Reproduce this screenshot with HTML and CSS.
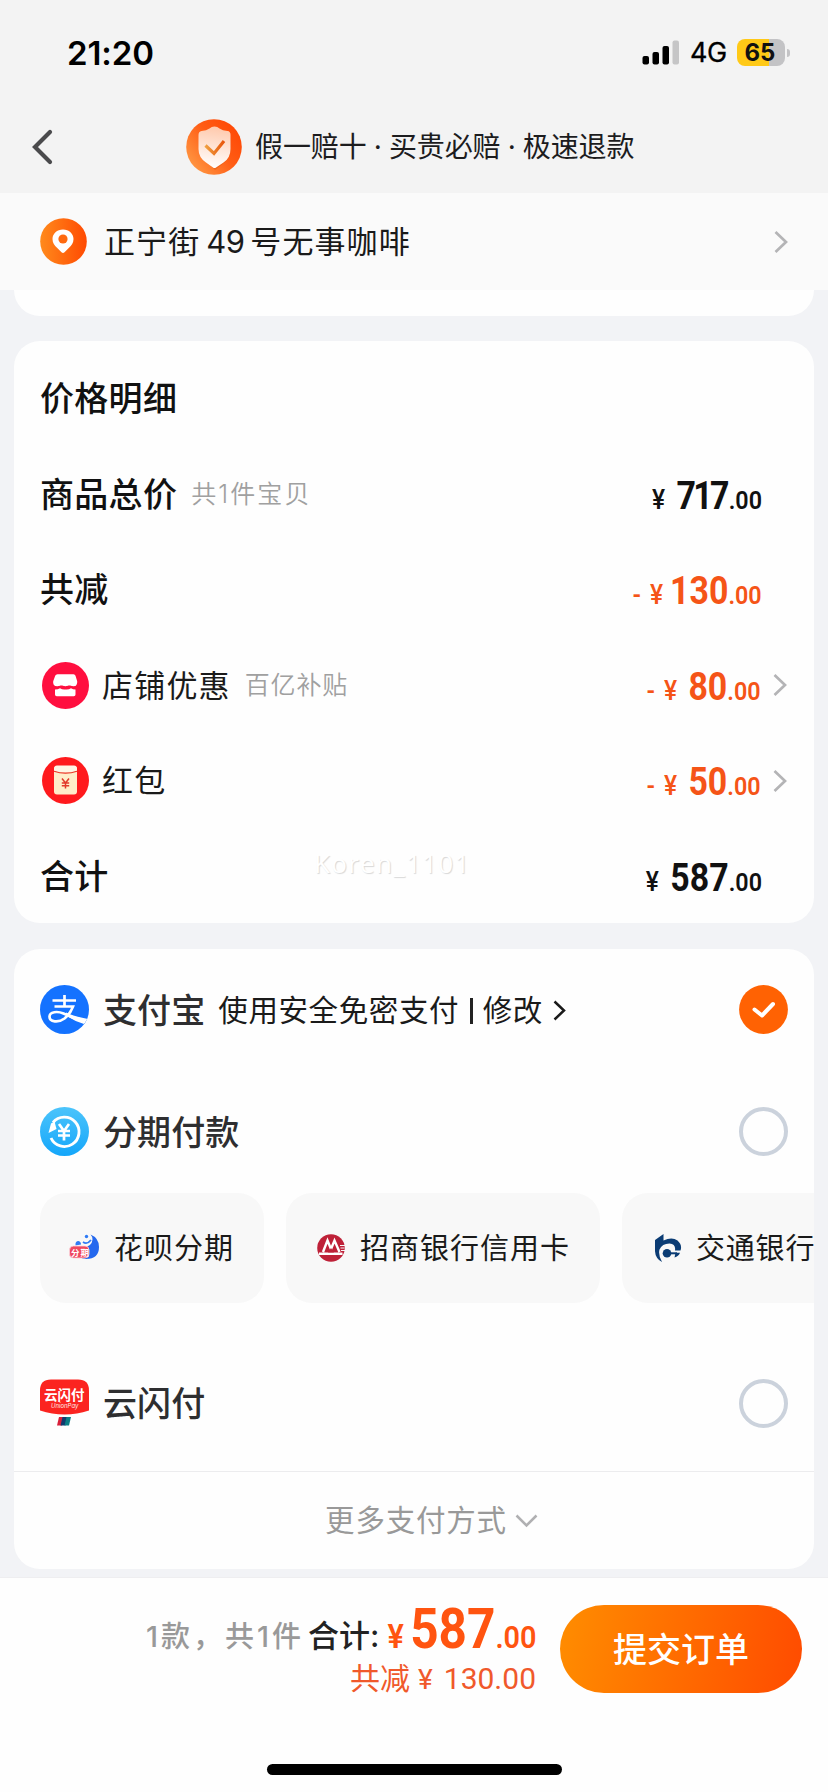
FILE: index.html
```html
<!DOCTYPE html>
<html lang="zh-CN">
<head>
<meta charset="utf-8">
<title>确认订单</title>
<link rel="stylesheet" href="styles.css">
</head>
<body>
<div class="page">
  <div class="status">
    <span class="time">21:20</span>
    <svg class="signal" width="38" height="26" viewBox="0 0 38 26"><rect x="0.5" y="16" width="6.5" height="8.5" rx="2"/><rect x="10.5" y="12" width="6.5" height="12.500" rx="2"/><rect x="20.500" y="6" width="6.500" height="18.500" rx="2"/><rect x="30.500" y="0.500" width="6.500" height="24" rx="2" fill="#c5c5c6"/></svg>
    <span class="net">4G</span>
    <span class="battery">65</span><span class="nub"></span>
  </div>
  <div class="nav">
    <svg class="back" width="22" height="36" viewBox="0 0 22 36"><path d="M19 3 4 18l15 15" fill="none" stroke="#4a4a4c" stroke-width="4.200" stroke-linecap="round"/></svg>
    <svg class="shield" width="56" height="56" viewBox="0 0 56 56">
      <defs>
        <linearGradient id="sg" x1="1" y1="0" x2="0" y2=".8"><stop offset="0" stop-color="#ff4200"/><stop offset=".5" stop-color="#ff5c14"/><stop offset="1" stop-color="#ff9a45"/></linearGradient>
        <linearGradient id="sw" x1=".5" y1="0" x2=".4" y2="1"><stop offset="0" stop-color="#ffc9ac"/><stop offset="1" stop-color="#fff"/></linearGradient>
        <linearGradient id="ck" x1="0" y1="0" x2="1" y2="0"><stop offset="0" stop-color="#f0a040"/><stop offset="1" stop-color="#e8560c"/></linearGradient>
      </defs>
      <circle cx="28" cy="28" r="27.800" fill="url(#sg)"/>
      <path d="M44 17q3 20-5 26l-10 8-4-4z" fill="#d9540e" opacity=".45"/>
      <path d="M28.500 7.500q3 0 5 2 3 2 8 2.500 3 .3 3 4v14q0 9-7 13.500l-7.500 5q-1.500 1-3 0l-7-5q-7.500-5-7.500-13.500V16q0-3.500 3-4 5-.5 8-2.500 2-2 5-2z" fill="url(#sw)"/>
      <path d="m19.500 26.500 8.500 8 10-12.500" fill="none" stroke="url(#ck)" stroke-width="3.200"/>
    </svg>
    <div class="promise"><span>假一赔十</span><i>·</i><span>买贵必赔</span><i>·</i><span>极速退款</span></div>
  </div>
  <div class="address">
    <svg width="47" height="47" viewBox="0 0 47 47">
      <defs><linearGradient id="pg" x1="0" y1="0" x2="1" y2="0"><stop offset="0" stop-color="#ff8a1c"/><stop offset="1" stop-color="#ff4a02"/></linearGradient></defs>
      <circle cx="23.500" cy="23.500" r="23.300" fill="url(#pg)"/>
      <path d="M23 11.500c6 0 10.500 4.200 10.500 9.500 0 4-2 6.500-4.500 8.800l-4.500 4.500q-1.500 1.400-3 0L17 29.800c-2.500-2.300-4.500-4.800-4.500-8.800 0-5.300 4.500-9.500 10.500-9.500z" fill="#fff"/><circle cx="23" cy="21" r="4.600" fill="#ff6a10"/>
    </svg>
    <div class="addr-text"><span>正宁街</span><b>49</b><span>号无事咖啡</span></div>
    <svg class="chev" width="14" height="24" viewBox="0 0 14 24"><path d="m1.500 2 10.500 10-10.500 10" fill="none" stroke="#b4b4b6" stroke-width="2.700"/></svg>
  </div>

  <div class="prev-card"></div>

  <div class="card prices">
    <div class="row"><span class="strong">价格明细</span></div>
    <div class="row"><span class="strong">商品总价</span><span class="hint wide">共<em>1</em>件宝贝</span><span class="price n717"><s>¥</s><b>717</b>.00</span></div>
    <div class="row"><span class="strong">共减</span><span class="price off n130"><u>-</u><s>¥</s><b>130</b>.00</span></div>
    <div class="row">
      <svg class="dot" width="47" height="47" viewBox="0 0 47 47"><circle cx="23.500" cy="23.500" r="23.500" fill="#ff0f3f"/><path d="M15.500 12.300h16q1.500 0 2 1.500l1.700 5.500q.5 5-4 5-2.300 0-3.800-2-1.600 2-4 2t-4-2q-1.600 2-4 2-5 0-4.200-5l2-5.500q.5-1.500 2.300-1.500z" fill="#fff"/><path d="M13 18h21v5.500H13z" fill="#fff"/><path d="M13 27.500q3 0 5-1.300 2.500 1.800 5.500 1.300 3 .5 5.500-1.300 2 1.300 4.500 1.300v5q0 1.700-1.700 1.700H14.700q-1.700 0-1.700-1.700z" fill="#fff"/></svg>
      <span class="item">店铺优惠</span><span class="hint">百亿补贴</span><span class="price off"><u>-</u><s>¥</s><b>80</b>.00</span>
      <svg class="chev" width="14" height="24" viewBox="0 0 14 24"><path d="m1.500 2 10.500 10-10.500 10" fill="none" stroke="#b4b4b6" stroke-width="2.700"/></svg>
    </div>
    <div class="row">
      <svg class="dot" width="47" height="47" viewBox="0 0 47 47"><circle cx="23.500" cy="23.500" r="23.500" fill="#ff1a1d"/><rect x="12" y="9" width="23" height="28.500" rx="3" fill="#ffedc9"/><path d="M12 14V12q0-3.500 3-3.500h17q3 0 3 3.500v2q-11.500 4-23 0z" fill="#fff6e6"/><path d="M12 14.200q11.500 4 23 0" fill="none" stroke="#ea3425" stroke-width="1.200"/><path d="m20 21.500 3.500 4.500 3.500-4.500M23.500 26v5.500M19.800 26h7.400M19.800 28.800h7.400" fill="none" stroke="#e23a2c" stroke-width="1.500"/></svg>
      <span class="item">红包</span><span class="price off"><u>-</u><s>¥</s><b>50</b>.00</span>
      <svg class="chev" width="14" height="24" viewBox="0 0 14 24"><path d="m1.500 2 10.500 10-10.500 10" fill="none" stroke="#b4b4b6" stroke-width="2.700"/></svg>
    </div>
    <div class="row"><span class="strong">合计</span><span class="price"><s>¥</s><b>587</b>.00</span></div>
    <span class="watermark">Koren_1101</span>
  </div>

  <div class="card pay">
    <div class="method m1">
      <svg width="49" height="49" viewBox="0 0 49 49"><defs><clipPath id="ac"><circle cx="24.500" cy="24.500" r="24.500"/></clipPath></defs><g clip-path="url(#ac)"><rect width="49" height="49" fill="#1472ff"/><path d="M12.500 15.500h23.500M24.500 10v11M14.500 21.500H33q-2.500 7-8.500 12c-6 4.500-15 3.500-15-1.700 0-5.300 8-5.800 14-3.300L34 33" fill="none" stroke="#fff" stroke-width="2.700"/><path d="M26 27.500q8 4 22 6.500l-4 5q-10-3-18-8.500z" fill="#fff"/></g></svg>
      <span class="name">支付宝</span>
      <span class="desc">使用安全免密支付</span><span class="bar"></span><span class="desc">修改</span>
      <svg class="go" width="14" height="22" viewBox="0 0 14 22"><path d="m1.500 1.500 9.500 9-9.500 9" fill="none" stroke="#1a1a1a" stroke-width="2.500"/></svg>
      <svg class="radio" width="49" height="49" viewBox="0 0 49 49"><circle cx="24.500" cy="24.500" r="24.400" fill="#ff6203"/><path d="m15.500 24.500 7.500 6L34 19" fill="none" stroke="#fff" stroke-width="4" stroke-linecap="round" stroke-linejoin="round"/></svg>
    </div>
    <div class="method m2">
      <svg width="49" height="49" viewBox="0 0 49 49"><defs><linearGradient id="bg" x1="0" y1="0" x2="0" y2="1"><stop offset="0" stop-color="#4cc4fb"/><stop offset="1" stop-color="#14a6fa"/></linearGradient></defs><circle cx="24.500" cy="24.500" r="24.500" fill="url(#bg)"/><path d="M13 15.500A14.700 14.700 0 1 1 11 31" fill="none" stroke="#fff" stroke-width="2.900"/><path d="M8.500 26 11 16.500l3.500-2 2 7.500z" fill="#fff"/><path d="m19 17 5 7 5-7M24 24v9.500M18 24h12M18 28.500h12" fill="none" stroke="#fff" stroke-width="2.700"/></svg>
      <span class="name">分期付款</span><span class="radio ring"></span>
    </div>
    <div class="chips">
      <div class="chip">
        <svg width="32" height="30" viewBox="0 0 32 30"><path d="M21.500 1.500q8.500 3.500 8.500 12.500 0 12-13 12-4 0-6-2l2-9q10-1 10.500-8.500 0-3-2-5z" fill="#2468ee"/><path d="M6.500 12.500q-.5-4.500 3-4.500 2.500.5 2.500 3.500z" fill="#2f7bf5"/><path d="M14 9q4 3 8-2" fill="none" stroke="#2f7bf5" stroke-width="1.800"/><circle cx="17.500" cy="3.500" r="1.700" fill="#2f7bf5"/><rect x=".5" y="13" width="19.500" height="12" rx="4" fill="#ef4961" stroke="#fbd3da" stroke-width=".8"/><text x="2" y="22.500" class="tag">分期</text></svg>
        <span>花呗分期</span>
      </div>
      <div class="chip c2">
        <svg width="28" height="28" viewBox="0 0 28 28"><circle cx="14" cy="14" r="13.800" fill="#be2138"/><path d="M6 18 10.500 6.500 14 15l3.500-8.500 5 11.500M2 19.800h23.500" fill="none" stroke="#fff" stroke-width="2.400"/><path d="M11 18.500h6l-3-4.500z" fill="#be2138"/><path d="M23 11.500h5M23.500 14h4M24 16.500h4" stroke="#f7f7f7" stroke-width="1"/></svg>
        <span>招商银行信用卡</span>
      </div>
      <div class="chip c3">
        <svg width="27" height="28" viewBox="0 0 27 28"><path d="M0 6 8.500 0v6.500Q17 2.500 22.500 6.500 27.500 11 25.500 16.500H20Q21 10 14.500 9.500 7 9.500 4.500 15.500 3 21 7 28-.5 24 0 15z" fill="#0b3c74"/><path d="M25 18.800q-1.500 3.700-5.500 4.700l1-4.700z" fill="#0b3c74"/><circle cx="12" cy="19.300" r="4.300" fill="#0b3c74"/><path d="M12 18.300h10v2H12z" fill="#0b3c74"/></svg>
        <span>交通银行</span>
      </div>
    </div>
    <div class="method m3">
      <svg width="49" height="49" viewBox="0 0 49 49"><path d="M11 .5h27q11 0 11 11v20Q37 35.500 24.500 35.500T0 31.500v-20Q0 .5 11 .5z" fill="#fb2420"/><text x="4" y="20.500" class="up-cn">云闪付</text><text x="11" y="29" class="up-en">UnionPay</text><path d="M19 38h5l-2 8.500h-5z" fill="#d8203a"/><path d="M22.500 38h5l-2 8.500h-5z" fill="#123a6e"/><path d="M26.500 38h4.500l-2 8.500h-4.500z" fill="#0b7d85"/></svg>
      <span class="name">云闪付</span><span class="radio ring"></span>
    </div>
    <div class="more"><span>更多支付方式</span><svg width="23" height="14" viewBox="0 0 23 14"><path d="m1.500 1.500 10 10 10-10" fill="none" stroke="#b0b0b2" stroke-width="2.500"/></svg></div>
  </div>

  <div class="footer">
    <div class="sum">
      <div class="line1"><span class="count"><em>1</em>款，共<em>1</em>件</span><span class="total">合计:</span><span class="big"><s>¥</s><b>587</b>.00</span></div>
      <div class="line2"><span>共减</span><s>¥</s><b>130.00</b></div>
    </div>
    <div class="submit">提交订单</div>
    <div class="home"></div>
  </div>
</div>
</body>
</html>
```
FILE: styles.css
```css
* { box-sizing: border-box; }
body { margin: 0; font-family: Inter, "Noto Sans CJK SC", sans-serif; color: #111; }
svg { display: block; flex: none; }
i, em { font-style: normal; }
s, u { text-decoration: none; }
span { white-space: nowrap; }
.page { width: 828px; height: 1792px; overflow: hidden; background: #f2f3f6; display: flex; flex-direction: column; }

.status { height: 100px; flex: none; background: #f3f3f3; display: flex; align-items: center; padding: 5px 38px 0 67px; }
.time { font-size: 33px; font-weight: 600; letter-spacing: -.1px; color: #000; }
.signal { margin-left: auto; margin-right: 10px; }
.net { font-size: 27px; font-weight: 400; color: #000; width: 47px; letter-spacing: -.5px; -webkit-text-stroke: .3px #000; }
.battery { width: 48px; height: 27px; border-radius: 8px; background: linear-gradient(90deg, #ffc917 66%, #c3c3c5 66%); font-size: 24px; line-height: 27px; font-weight: 700; text-align: center; color: #111; padding-right: 2px; }
.nub { width: 3px; height: 8px; background: #c3c3c5; border-radius: 0 3px 3px 0; margin-left: 2px; }

.nav { height: 93px; flex: none; background: #f3f3f3; display: flex; align-items: center; padding-left: 31px; }
.shield { margin-left: 133px; }
.promise { display: flex; margin-left: 13px; font-size: 28px; line-height: 40px; letter-spacing: -.1px; color: #1c1c1e; }
.promise i { width: 22.3px; text-align: center; }

.address { height: 97px; flex: none; background: #fafafa; display: flex; align-items: center; padding: 0 40px; }
.addr-text { display: flex; margin-left: 17px; font-size: 31px; line-height: 44px; letter-spacing: 1.1px; color: #1a1a1a; }
.addr-text b { font-weight: 400; letter-spacing: -.5px; width: 50px; text-align: center; }
.address .chev { margin-left: auto; }

.prev-card { height: 26px; flex: none; margin: 0 14px 25px; background: #fefefe; border-radius: 0 0 26px 26px; }
.card { flex: none; margin: 0 14px; background: #fefefe; border-radius: 26px; overflow: hidden; position: relative; }
.prices { height: 582px; padding: 10px 27px 0; margin-bottom: 26px; }
.row { height: 95.5px; display: flex; align-items: center; }
.strong { font-size: 34px; letter-spacing: .3px; font-weight: 500; margin-left: -1px; padding-bottom: 4px; }
.hint { font-size: 25px; letter-spacing: .8px; color: #a0a0a0; font-weight: 350; margin-left: 14px; padding-bottom: 4px; }
.hint.wide { letter-spacing: 2.1px; }
.dot { margin-left: 1px; }
.item { font-size: 31px; letter-spacing: 1.2px; margin-left: 13px; color: #1a1a1a; padding-bottom: 4px; }
.price { margin-left: auto; margin-right: 25px; font-family: Roboto, sans-serif; font-size: 26.5px; font-weight: 600; line-height: 46px; display: flex; align-items: baseline; transform: scaleX(.88); transform-origin: right; padding-top: 7px; }
.price s { font-size: 28px; font-weight: 500; }
.price b { font-size: 38.5px; font-weight: 700; margin-left: 13px; }
.n717 b { letter-spacing: -3px; margin-right: 2px; }
.n130 b { margin-left: 8px; }
.price u { margin-right: 10px; }
.off { color: #f55417; }
.row .chev { margin: 0 0 0 -13px; }
.watermark { position: absolute; left: 300px; top: 504px; font-family: "Open Sans", sans-serif; font-size: 26px; letter-spacing: 1.3px; color: #fff; text-shadow: 1px 1px 1px #d8d8d8; }

.method { display: flex; align-items: center; padding: 0 26px; color: #2e2e30; }
.m1 { height: 121px; }
.m2 { height: 123px; }
.m3 { height: 168px; padding-top: 32px; }
.name { font-size: 34px; letter-spacing: .1px; font-weight: 500; margin-left: 14px; padding-bottom: 3px; }
.desc { font-size: 29.5px; letter-spacing: .6px; color: #1a1a1a; padding-bottom: 4px; }
.name + .desc { margin-left: 13px; }
.bar { width: 2.5px; height: 26px; background: #222; margin: 2px 10px 0 11px; }
.go { margin: 2px 0 0 10px; }
.radio { margin-left: auto; }
.ring { width: 49px; height: 49px; border: 4.5px solid #cbd2dc; border-radius: 50%; }
.chips { display: flex; gap: 22px; padding-left: 26px; height: 110px; }
.chip { flex: none; width: 224px; background: #f8f8f8; border-radius: 26px; display: flex; align-items: center; padding-left: 29px; font-size: 29px; letter-spacing: 1px; color: #1a1a1a; }
.chip span { margin-left: 13px; padding-bottom: 4px; }
.c2 { width: 314px; padding-left: 31px; }
.c2 span { margin-left: 15px; }
.c3 { width: 192px; padding-left: 33px; border-radius: 26px 0 0 26px; }
.c3 span { margin-left: 14px; letter-spacing: .8px; }
.tag { font-size: 8.5px; font-weight: 700; fill: #fff; }
.up-cn { font-size: 13.5px; font-weight: 700; fill: #fff; }
.up-en { font-size: 6px; font-style: italic; fill: #ffe9e6; }
.more { border-top: 1.5px solid #ececee; height: 98px; display: flex; align-items: center; justify-content: center; gap: 8px; font-size: 29.5px; letter-spacing: .8px; color: #999; padding-left: 35px; }
.more span { padding-bottom: 5px; }

.footer { flex: 1; margin-top: 8px; background: #fefefe; border-top: 1px solid #eeeef0; position: relative; display: flex; align-items: flex-start; padding: 27px 26px 0 0; }
.sum { margin-left: auto; display: flex; flex-direction: column; align-items: flex-end; }
.line1 { display: flex; align-items: baseline; line-height: 48px; height: 51px; }
.count { font-size: 29px; letter-spacing: 3px; color: #999; font-weight: 500; position: relative; top: -1px; }
.total { font-size: 31px; font-weight: 500; margin-left: 4px; color: #222; position: relative; top: -1px; }
.big { font-family: Roboto, sans-serif; font-size: 32px; font-weight: 600; color: #ff5410; display: flex; align-items: baseline; transform: scaleX(.9); transform-origin: right; margin-left: -9px; }
.big s { font-size: 34px; }
.big b { font-size: 55px; font-weight: 700; margin-left: 7px; }
.line2 { display: flex; align-items: baseline; font-size: 30px; line-height: 44px; color: #f0592b; }
.line2 s { font-family: Roboto; margin-left: 8px; font-size: 28px; }
.line2 b { font-family: Roboto; font-weight: 400; margin-left: 11px; }
.submit { width: 242px; height: 88px; margin-left: 24px; border-radius: 44px; background: linear-gradient(100deg, #ff8d00, #ff4b00); color: #fff; font-size: 34px; font-weight: 500; line-height: 89px; text-align: center; }
.home { position: absolute; left: 267px; bottom: 17px; width: 295px; height: 11px; border-radius: 6px; background: #000; }
```
